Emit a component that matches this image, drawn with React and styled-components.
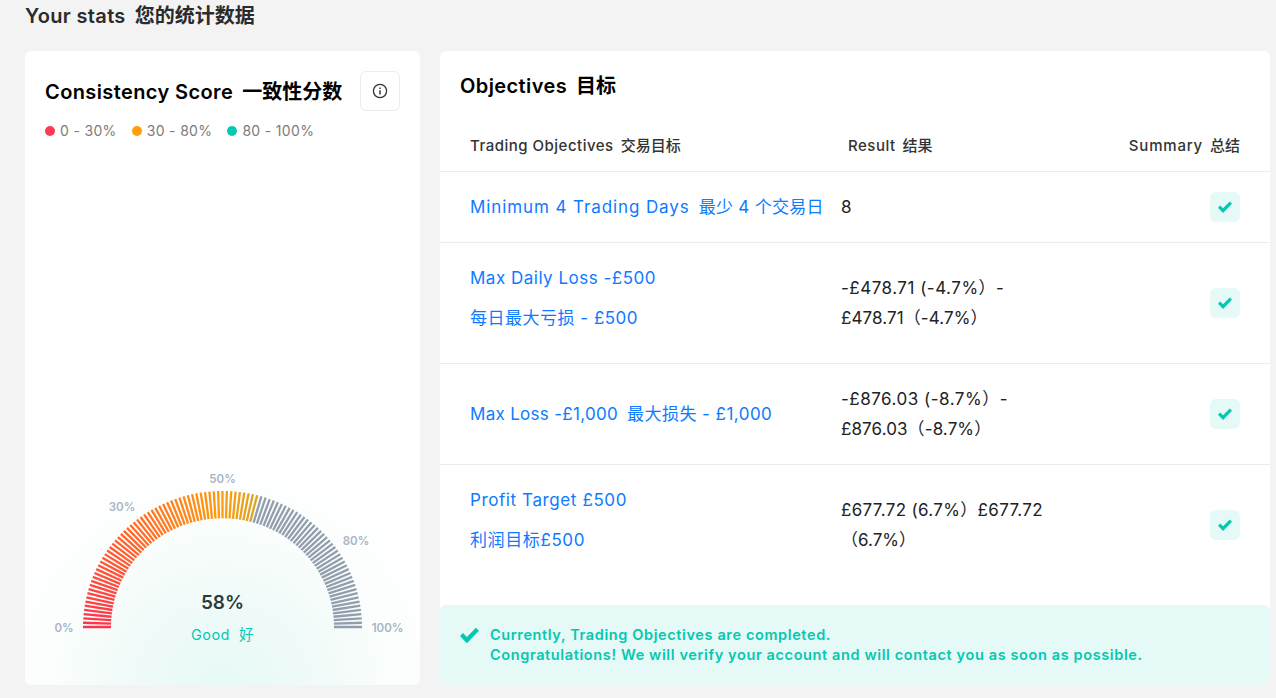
import React from "react";
import styled, { createGlobalStyle } from "styled-components";

const FONT = `"Inter", "Noto Sans CJK SC", sans-serif`;
const TEAL = "#05c8b0";
const MINT = "#e5f9f6";

const Global = createGlobalStyle`
  html, body { margin: 0; height: 698px; overflow: hidden; background: #f3f3f3; }
  body { font-family: ${FONT}; }
`;

const Page = styled.div`
  height: 698px;
  box-sizing: border-box;
  padding: 0 6px 13px 25px;
  display: flex;
  flex-direction: column;
`;
const PageTitle = styled.h1`
  margin: 0 0 19px;
  height: 32px;
  line-height: 32px;
  font-size: 20px;
  font-weight: 600;
  color: #2b2b2b;
  letter-spacing: 0.35px;
`;
const Columns = styled.div`
  flex: 1;
  min-height: 0;
  display: flex;
  gap: 20px;
`;
const Card = styled.section`
  background: #fff;
  border-radius: 6px;
  display: flex;
  flex-direction: column;
  overflow: hidden;
`;
const ScoreCard = styled(Card)`
  width: 395px;
  box-sizing: border-box;
  padding-top: 20px;
  background: radial-gradient(circle 235px at 197px 640px, ${MINT} 0%, #f2fbf9 45%, #fbfefd 75%, #fff 100%);
`;
const ScoreHead = styled.div`
  display: flex;
  align-items: center;
  justify-content: space-between;
  padding: 0 20px;
`;
const ScoreTitle = styled.h2`
  margin: 0 0 2px;
  font-size: 20px;
  font-weight: 600;
  color: #000;
  letter-spacing: 0.39px;
`;
const InfoButton = styled.button`
  width: 40px;
  height: 40px;
  padding: 0;
  background: #fff;
  border: 1px solid #ececec;
  border-radius: 6px;
  display: flex;
  align-items: center;
  justify-content: center;
`;
const Legend = styled.div`
  display: flex;
  gap: 15px;
  padding: 10px 20px 0;
`;
const LegendItem = styled.span`
  display: flex;
  align-items: center;
  gap: 5px;
  font-size: 14px;
  line-height: 20px;
  letter-spacing: 0.33px;
  color: #7c7c7c;
  &::before {
    content: "";
    width: 10px;
    height: 10px;
    border-radius: 50%;
    background: ${(p) => p.$dot};
  }
`;
const GaugeSvg = styled.svg`
  display: block;
  margin-top: auto;
  flex: none;
`;

const ObjectivesCard = styled(Card)`
  width: 830px;
`;
const ObjTitle = styled.h2`
  margin: 0;
  padding: 20px 20px 0;
  line-height: 30px;
  font-size: 20px;
  font-weight: 600;
  letter-spacing: 0.4px;
  color: #000;
`;
const Row = styled.div`
  display: grid;
  grid-template-columns: 371px 1fr auto;
  align-items: center;
  padding: ${(p) => (p.$head ? "27px 30px 7px" : "20px 30px")};
  border-bottom: ${(p) => (p.$last ? "none" : "1px solid #ebebeb")};
`;
const HeadCell = styled.div`
  font-size: 15px;
  line-height: 36px;
  font-weight: 500;
  letter-spacing: ${(p) => p.$track || 0.5}px;
  color: #333;
  padding-left: ${(p) => p.$indent || 0}px;
`;
const Goal = styled.div`
  font-size: 17px;
  color: #0d7bff;
`;
const GoalLine = styled.div`
  line-height: 30px;
  margin-bottom: ${(p) => (p.$stack ? 10 : 0)}px;
  letter-spacing: ${(p) => p.$track || 0}px;
  white-space: nowrap;
`;
const Result = styled.div`
  font-size: 17px;
  line-height: 30px;
  color: #222;
`;
const ResultLine = styled.div`
  letter-spacing: ${(p) => p.$track || 0}px;
  white-space: nowrap;
`;
const Zh = styled.span`
  margin-left: 9px;
  letter-spacing: ${(p) => (p.$track === undefined ? "inherit" : `${p.$track}px`)};
`;
const HeadZh = styled(Zh)`
  margin-left: 7px;
`;
const CheckBox = styled.div`
  width: 30px;
  height: 30px;
  border-radius: 6px;
  background: ${MINT};
  display: flex;
  align-items: center;
  justify-content: center;
`;
const Alert = styled.div`
  margin-top: auto;
  height: 80px;
  box-sizing: border-box;
  padding: 20px;
  background: ${MINT};
  border-radius: 6px;
  color: ${TEAL};
  display: flex;
  align-items: flex-start;
  gap: 11px;
  font-size: 14.5px;
  line-height: 20px;
  font-weight: 600;
  letter-spacing: 0.62px;
`;
const AlertIcon = styled.div`
  height: 20px;
  display: flex;
  align-items: center;
  flex: none;
`;

const Tick = ({ size }) => (
  <svg width={size} height={size * 0.86} viewBox="0 0 18 15.5" fill={TEAL}>
    <polygon points="0,8.6 2.9,5.7 6.5,9.4 15.1,0.6 18,3.5 6.5,15.5" />
  </svg>
);

const mix = (a, b, t) => a.map((v, i) => Math.round(v + (b[i] - v) * t));
const RED = [255, 52, 76];
const ORANGE = [255, 155, 12];
const OLIVE = [218, 165, 38];
const tickColor = (i) => {
  if (i > 58) return "#939eac";
  const c = i <= 50 ? mix(RED, ORANGE, i / 50) : mix(ORANGE, OLIVE, (i - 50) / 8);
  return `rgb(${c.join(",")})`;
};

const CX = 197.5;
const CY = 172;
const SQUISH = 0.975;
const ticks = Array.from({ length: 101 }, (_, i) => {
  const a = (i * 1.8 * Math.PI) / 180;
  const cos = Math.cos(a);
  const sin = Math.sin(a);
  return {
    i,
    x1: CX - 111.5 * cos,
    y1: CY - 111.5 * SQUISH * sin,
    x2: CX - 139.5 * cos,
    y2: CY - 139.5 * SQUISH * sin,
  };
});

const labels = [
  ["0%", 39, 173],
  ["30%", 97, 52],
  ["50%", 197.5, 24],
  ["80%", 331, 86],
  ["100%", 362.5, 173],
];

const Gauge = () => (
  <GaugeSvg width="395" height="230" viewBox="0 0 395 230">
    {ticks.map((t) => (
      <line key={t.i} x1={t.x1} y1={t.y1} x2={t.x2} y2={t.y2} stroke={tickColor(t.i)} strokeWidth="2.3" />
    ))}
    {labels.map(([txt, x, y]) => (
      <text key={txt} x={x} y={y} dy="4" textAnchor="middle" fontSize="11.5" fontWeight="600" fill="#a8b3c6" fontFamily={FONT}>
        {txt}
      </text>
    ))}
    <text x={CX} y="147" dy="7" textAnchor="middle" fontSize="19" fontWeight="600" fill="#2c3a3c" fontFamily={FONT}>
      58%
    </text>
    <text x={CX} y="180" dy="5" textAnchor="middle" fontSize="14.5" letterSpacing="0.5" fill={TEAL} fontFamily={FONT}>
      {"Good\u00A0\u00A0好"}
    </text>
  </GaugeSvg>
);

const Check = () => (
  <CheckBox>
    <Tick size={14} />
  </CheckBox>
);

export default function App() {
  return (
    <Page>
      <Global />
      <PageTitle>
        Your stats<Zh $track={0}>您的统计数据</Zh>
      </PageTitle>
      <Columns>
        <ScoreCard>
          <ScoreHead>
            <ScoreTitle>
              Consistency Score<Zh $track={0}>一致性分数</Zh>
            </ScoreTitle>
            <InfoButton aria-label="info">
              <svg width="16" height="16" viewBox="0 0 16 16" fill="none" stroke="#333" strokeWidth="1.3">
                <circle cx="8" cy="8" r="6.6" />
                <path d="M8 7.2V11.4" strokeWidth="1.5" />
                <path d="M8 4.6V6" strokeWidth="1.5" />
              </svg>
            </InfoButton>
          </ScoreHead>
          <Legend>
            <LegendItem $dot="#ff3a54">0 - 30%</LegendItem>
            <LegendItem $dot="#ff9f0a">30 - 80%</LegendItem>
            <LegendItem $dot={TEAL}>80 - 100%</LegendItem>
          </Legend>
          <Gauge />
        </ScoreCard>

        <ObjectivesCard>
          <ObjTitle>
            Objectives<Zh $track={0}>目标</Zh>
          </ObjTitle>
          <Row $head>
            <HeadCell>
              Trading Objectives<HeadZh $track={0}>交易目标</HeadZh>
            </HeadCell>
            <HeadCell $indent={7}>
              Result<HeadZh $track={0}>结果</HeadZh>
            </HeadCell>
            <HeadCell $track={0.8}>
              Summary<HeadZh $track={0}>总结</HeadZh>
            </HeadCell>
          </Row>
          <Row>
            <Goal>
              <GoalLine $track={0.9}>
                Minimum 4 Trading Days<Zh $track={0.3}>最少 4 个交易日</Zh>
              </GoalLine>
            </Goal>
            <Result>8</Result>
            <Check />
          </Row>
          <Row>
            <Goal>
              <GoalLine $stack $track={0.5}>Max Daily Loss -£500</GoalLine>
              <GoalLine $stack $track={0.5}>每日最大亏损 - £500</GoalLine>
            </Goal>
            <Result>
              <ResultLine $track={0.5}>-£478.71 (-4.7%）-</ResultLine>
              <ResultLine $track={0.1}>£478.71（-4.7%）</ResultLine>
            </Result>
            <Check />
          </Row>
          <Row>
            <Goal>
              <GoalLine $track={0.3}>
                Max Loss -£1,000<Zh $track={0.45}>最大损失 - £1,000</Zh>
              </GoalLine>
            </Goal>
            <Result>
              <ResultLine $track={0.5}>-£876.03 (-8.7%）-</ResultLine>
              <ResultLine $track={0.1}>£876.03（-8.7%）</ResultLine>
            </Result>
            <Check />
          </Row>
          <Row $last>
            <Goal>
              <GoalLine $stack $track={0.6}>Profit Target £500</GoalLine>
              <GoalLine $stack $track={0.6}>利润目标£500</GoalLine>
            </Goal>
            <Result>
              <ResultLine $track={0.33}>£677.72 (6.7%）£677.72</ResultLine>
              <ResultLine>（6.7%）</ResultLine>
            </Result>
            <Check />
          </Row>
          <Alert>
            <AlertIcon>
              <Tick size={19} />
            </AlertIcon>
            <div>
              Currently, Trading Objectives are completed.
              <br />
              Congratulations! We will verify your account and will contact you as soon as possible.
            </div>
          </Alert>
        </ObjectivesCard>
      </Columns>
    </Page>
  );
}
